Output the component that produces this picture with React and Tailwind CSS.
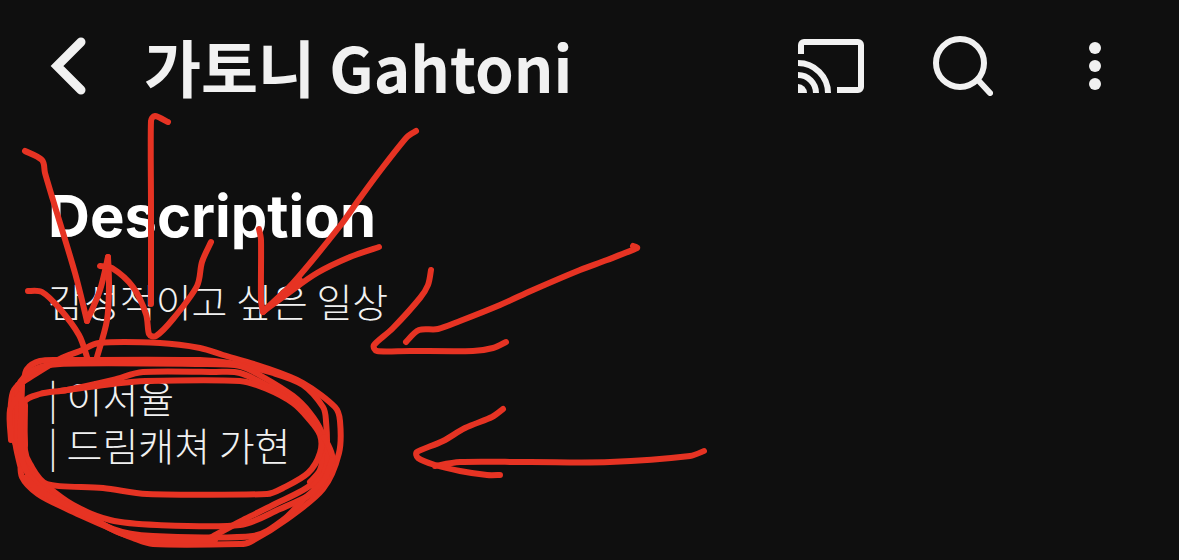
import React from 'react';

// freehand pen strokes, each one a list of [x, y] points
const strokes = [
  // arrows on the left
  [[25, 151], [42, 160], [45, 173], [53, 200], [75, 273], [87, 321]],
  [[87, 321], [100, 290], [108, 257]],
  [[108, 257], [109, 285], [107, 320], [97, 357]],
  [[28, 291], [42, 292], [60, 309], [79, 335], [87, 357]],
  [[100, 266], [112, 268], [133, 287], [146, 314], [149, 334], [156, 336], [173, 319], [197, 286], [202, 262], [211, 242]],
  [[151, 304], [151, 210], [151, 121], [155, 116], [168, 122]],
  [[416, 131], [407, 137], [383, 167], [360, 198], [340, 226], [293, 283], [263, 312]],
  [[263, 312], [261, 300], [261, 240], [259, 229]],
  [[264, 311], [287, 294], [317, 273], [350, 257], [379, 247]],
  [[264, 311], [282, 294], [300, 280]],
  // arrow in the middle
  [[431, 270], [428, 285], [420, 298], [393, 328], [374, 345], [377, 351], [410, 351], [473, 351], [493, 348], [506, 342]],
  [[406, 342], [419, 330], [438, 329], [460, 321], [500, 305], [533, 290], [580, 270], [607, 260], [637, 248], [633, 246]],
  // arrow at the bottom
  [[503, 409], [492, 417], [465, 428], [443, 441], [417, 452], [418, 458], [435, 465], [460, 471], [487, 475], [500, 475]],
  [[435, 466], [460, 462], [530, 462], [610, 462], [690, 456], [704, 451]],
  // circles around the names
  [[24, 381], [60, 359], [80, 351], [99, 343], [160, 343], [200, 348], [223, 355], [263, 367], [303, 383], [335, 407], [340, 421], [339, 453], [323, 489], [287, 519], [250, 542], [240, 544], [153, 544], [133, 538], [107, 527], [67, 509], [38, 494], [22, 477], [20, 455], [11, 430], [13, 392], [28, 377]],
  [[24, 381], [27, 369], [40, 361], [60, 360], [200, 360], [230, 363], [273, 373], [303, 385], [323, 407], [326, 421], [326, 453], [313, 483], [273, 505], [245, 519], [210, 538]],
  [[20, 465], [15, 440], [15, 395], [30, 372], [60, 364], [200, 364], [240, 366], [263, 377], [293, 396], [310, 413], [321, 431], [323, 450], [320, 470], [310, 482]],
  [[25, 445], [24, 403], [40, 394], [67, 390], [113, 380], [143, 372], [215, 372], [240, 373], [270, 387], [293, 400], [310, 415], [322, 433], [328, 452], [324, 473], [313, 486]],
  [[60, 391], [113, 384], [145, 381], [240, 381], [267, 389], [293, 403], [308, 418], [320, 435], [320, 453], [308, 473], [283, 488], [267, 494], [147, 494], [103, 488], [47, 484], [30, 464], [25, 450], [25, 405]],
  [[18, 385], [18, 445], [25, 466], [43, 483], [73, 505], [110, 520], [157, 525], [240, 525], [280, 509], [313, 493], [330, 475], [332, 455], [324, 437]],
  [[22, 385], [21, 450], [28, 474], [57, 499], [113, 529], [153, 536], [253, 536], [283, 520], [304, 499], [324, 480], [332, 460]],
  [[11, 440], [10, 410], [20, 395]],
  [[25, 478], [45, 494], [80, 511], [120, 533], [153, 540], [215, 540]],
];

// smooth curve through all of the points
function toPath(points) {
  let d = `M${points[0][0]} ${points[0][1]}`;
  for (let i = 0; i < points.length - 1; i++) {
    const p0 = points[i - 1] || points[i];
    const p1 = points[i];
    const p2 = points[i + 1];
    const p3 = points[i + 2] || p2;
    // keep handles shorter than the segment so long neighbours don't overshoot
    const len = Math.hypot(p2[0] - p1[0], p2[1] - p1[1]);
    const handle = (a, b) => {
      const dx = b[0] - a[0];
      const dy = b[1] - a[1];
      const k = Math.min(1 / 6, len / 3 / (Math.hypot(dx, dy) || 1));
      return [dx * k, dy * k];
    };
    const h1 = handle(p0, p2);
    const h2 = handle(p1, p3);
    d += ` C${p1[0] + h1[0]} ${p1[1] + h1[1]} ${p2[0] - h2[0]} ${p2[1] - h2[1]} ${p2[0]} ${p2[1]}`;
  }
  return d;
}

function BackIcon() {
  return (
    <svg width="36" height="60" viewBox="0 0 36 60" fill="none" stroke="currentColor" strokeWidth="9" strokeLinecap="round">
      <path d="M31 6 7 30l24 24" />
    </svg>
  );
}

function CastIcon() {
  return (
    <svg width="66" height="54" viewBox="0 0 66 54" fill="none" stroke="currentColor" strokeWidth="6">
      <path d="M3 15V6a3 3 0 0 1 3-3h54a3 3 0 0 1 3 3v42a3 3 0 0 1-3 3H39" />
      <path d="M0 24a30 30 0 0 1 30 30" />
      <path d="M0 36a18 18 0 0 1 18 18" />
      <path d="M0 45a9 9 0 0 1 9 9H0z" fill="currentColor" stroke="none" />
    </svg>
  );
}

function SearchIcon() {
  return (
    <svg width="60" height="60" viewBox="0 0 60 60" fill="none" stroke="currentColor" strokeWidth="6" strokeLinecap="round">
      <circle cx="27" cy="27" r="24" />
      <path d="m45 44 12 13" />
    </svg>
  );
}

function MoreIcon() {
  return (
    <svg width="12" height="48" viewBox="0 0 12 48" fill="currentColor">
      <circle cx="6" cy="6" r="6" />
      <circle cx="6" cy="24" r="6" />
      <circle cx="6" cy="42" r="6" />
    </svg>
  );
}

function App() {
  return (
    <div className="relative min-h-screen overflow-hidden bg-[#0f0f0f] text-[#f1f1f1] font-['Noto_Sans_CJK_KR',sans-serif]">
      <header className="flex h-33 items-center pl-[50px] pr-[78px]">
        <button type="button" aria-label="Back">
          <BackIcon />
        </button>
        <h1 className="ml-[58px] flex-1 whitespace-nowrap text-[62px] leading-none font-bold">가토니 Gahtoni</h1>
        <div className="flex items-center">
          <button type="button" aria-label="Cast">
            <CastIcon />
          </button>
          <button type="button" aria-label="Search" className="ml-[69px]">
            <SearchIcon />
          </button>
          <button type="button" aria-label="More options" className="ml-24">
            <MoreIcon />
          </button>
        </div>
      </header>

      <main className="px-12 pt-12">
        <h2 className="text-[58px] leading-[72px] font-bold text-white font-['Inter',sans-serif]">Description</h2>
        <div className="mt-6 text-[39px] leading-12 font-light">
          <p>감성적이고 싶은 일상</p>
          <p className="mt-12">
            | 이서율
            <br />| 드림캐쳐 가현
          </p>
        </div>
      </main>

      <svg
        className="pointer-events-none absolute top-0 left-0"
        width="1179"
        height="560"
        viewBox="0 0 1179 560"
        fill="none"
        stroke="#e63323"
        strokeWidth="6"
        strokeLinecap="round"
        strokeLinejoin="round"
        aria-hidden="true"
      >
        {strokes.map((points, i) => (
          <path key={i} d={toPath(points)} />
        ))}
      </svg>
    </div>
  );
}

export default App;
